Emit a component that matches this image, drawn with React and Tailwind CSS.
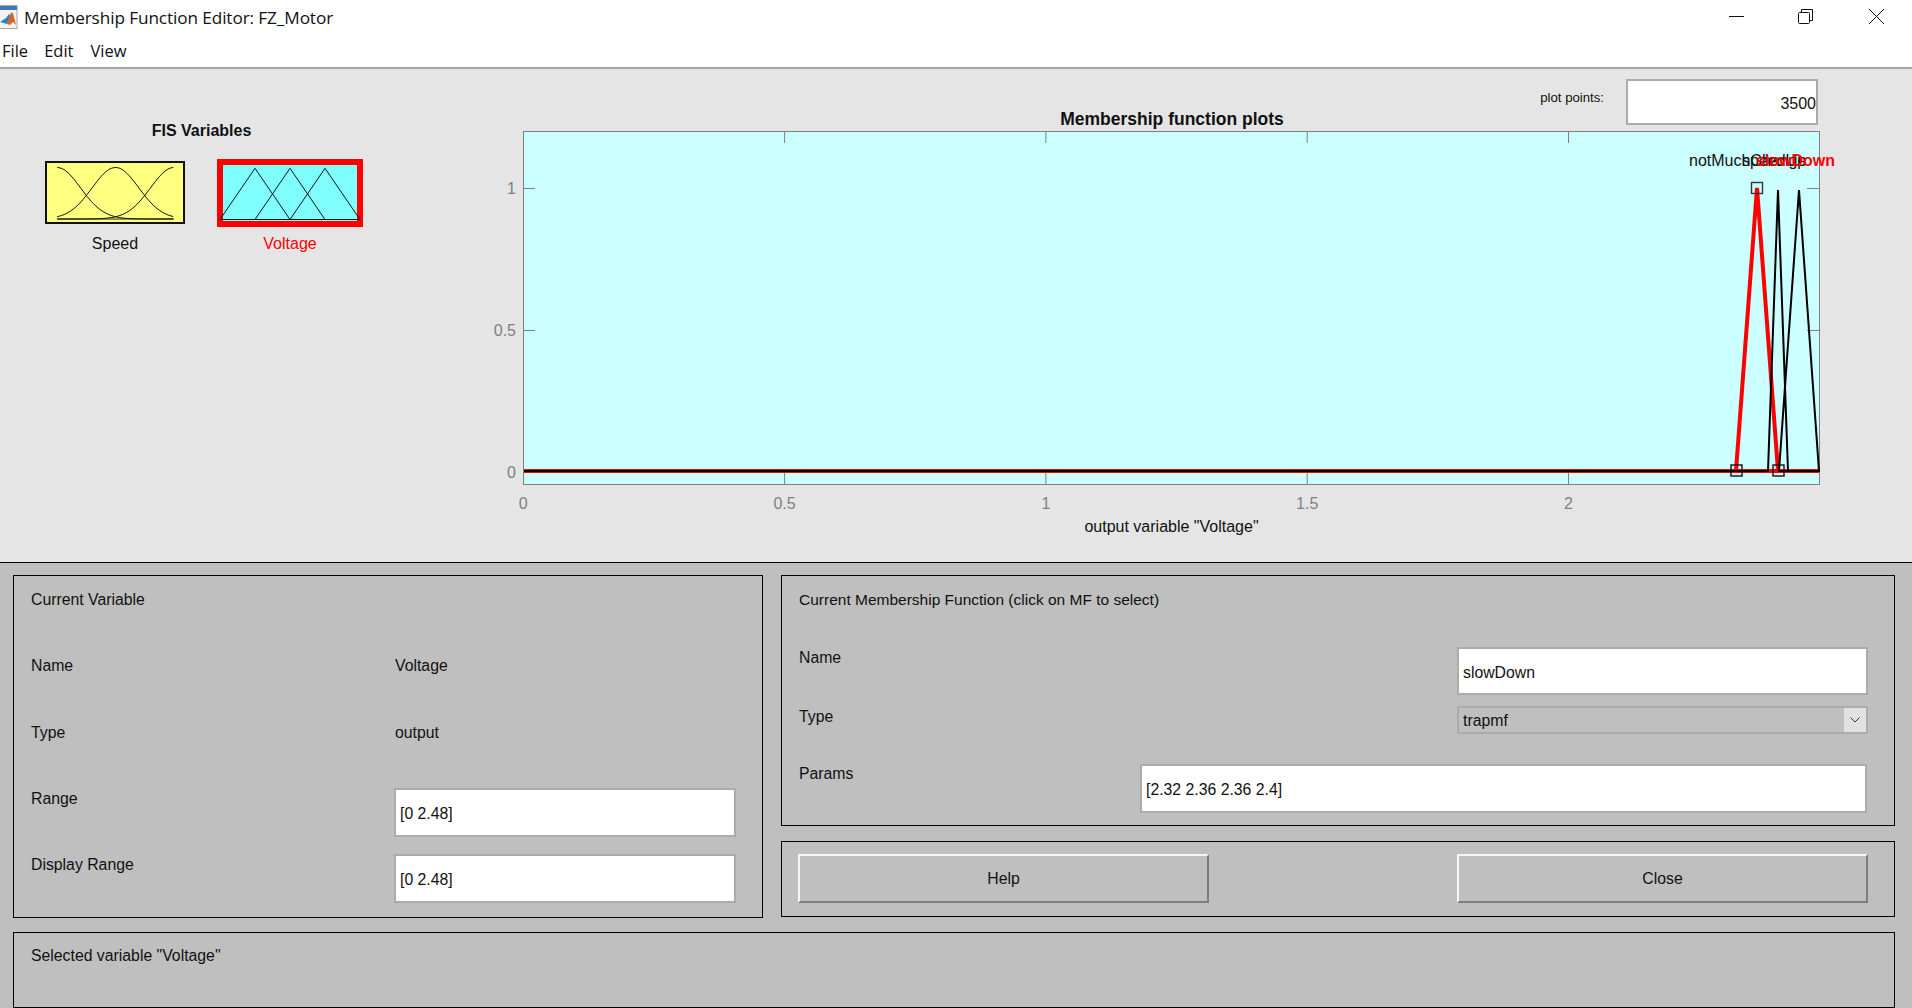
const sans = "font-['Liberation_Sans',Arial,sans-serif]";

// eje x del plot: 0 en 523.3, 522.6 px por unidad
const px = (v) => 523.3 + 522.6 * v;
const Y0 = 471;
const Y1 = 188;

const gauss = (c) => {
    const pts = [];
    for (let x = 56.7; x <= 173.4; x += 2) {
        const y = 219.5 - 51.5 * Math.exp(-((x - c) * (x - c)) / (2 * 23.3 * 23.3));
        pts.push(`${x.toFixed(1)},${y.toFixed(1)}`);
    }
    return pts.join(' ');
};

const MatlabIcon = () => (
    <svg width="18" height="24" viewBox="0 0 18 24" className="shrink-0">
        <rect x="-3" y="0.5" width="20" height="23" fill="#f4f4f4" stroke="#a8a8a8" />
        <rect x="-3" y="1" width="20" height="4" fill="#3f78b5" />
        <path d="M0 17 L6 13 L9 9 L11 12 L7 19 Z" fill="#2f7fc4" />
        <path d="M7 19 L11 7.5 L13 8 L16 20 L13 17 L10 20 Z" fill="#d9651f" />
    </svg>
);

const WindowControls = () => (
    <div className="flex items-start pt-[9px] pr-[28px]">
        <svg width="15" height="15" viewBox="0 0 15 15" className="mr-[54px]">
            <path d="M0 7.5H15" stroke="#111" strokeWidth="1" />
        </svg>
        <svg width="15" height="15" viewBox="0 0 15 15" className="mr-[56px]">
            <path d="M3.5 3.5V0.5H14.5V11.5H11.5" fill="none" stroke="#111" />
            <rect x="0.5" y="3.5" width="11" height="11" rx="1" fill="#fff" stroke="#111" />
        </svg>
        <svg width="15" height="15" viewBox="0 0 15 15">
            <path d="M0 0L15 15M15 0L0 15" stroke="#111" strokeWidth="1" />
        </svg>
    </div>
);

const SpeedIcon = () => (
    <svg width="140" height="63" viewBox="44.5 161.5 140 63">
        <rect x="45.5" y="162.5" width="138" height="61" fill="#ffff80" stroke="#111" strokeWidth="2" />
        <path d="M56.7 219.5H173.4" stroke="#222" strokeWidth="1.2" />
        <polyline points={gauss(56.7)} fill="none" stroke="#111" strokeWidth="1" />
        <polyline points={gauss(115)} fill="none" stroke="#111" strokeWidth="1" />
        <polyline points={gauss(173.4)} fill="none" stroke="#111" strokeWidth="1" />
    </svg>
);

const VoltageIcon = () => (
    <svg width="146" height="68" viewBox="217 159 146 68">
        <rect x="220" y="162" width="140" height="62" fill="#80ffff" stroke="#ff0000" strokeWidth="6" />
        <path
            d="M220 219.5H360M220 219.5L255 168.3L290 219.5M255 219.5L290 168.3L325 219.5M290 219.5L325 168.3L360 219.5"
            fill="none"
            stroke="#111"
            strokeWidth="1"
        />
    </svg>
);

const PlotChart = () => {
    const xTicks = [0, 0.5, 1, 1.5, 2];
    return (
        <svg width="1432" height="421" viewBox="480 129 1432 421" className={`block overflow-visible ${sans}`}>
            <rect x="523.5" y="131.5" width="1296" height="353" fill="#ccffff" stroke="#808080" />
            {xTicks.map((v) => (
                <g key={v}>
                    {v > 0 && <path d={`M${px(v)} 131V143M${px(v)} 484V472`} stroke="#808080" />}
                    <text x={px(v)} y="509" textAnchor="middle" fontSize="16" fill="#808080">
                        {v}
                    </text>
                </g>
            ))}
            {[
                ['1', Y1],
                ['0.5', 330],
            ].map(([label, y]) => (
                <path key={label} d={`M523 ${y}.5H535M1807 ${y}.5H1819`} stroke="#808080" />
            ))}
            <text x="516" y="194" textAnchor="end" fontSize="16" fill="#808080">1</text>
            <text x="516" y="336" textAnchor="end" fontSize="16" fill="#808080">0.5</text>
            <text x="516" y="478" textAnchor="end" fontSize="16" fill="#808080">0</text>

            <path d={`M524 ${Y0}H1819`} stroke="#ff0000" strokeWidth="4" />
            <path d={`M1736 ${Y0}L1757 ${Y1}L1778 ${Y0}`} fill="none" stroke="#ff0000" strokeWidth="4" />
            <path
                d={`M524 ${Y0}H1768L1778 ${Y1 + 2}L1788 ${Y0}H1779L1799 ${Y1 + 2}L1819 ${Y0}H1788`}
                fill="none"
                stroke="#000"
                strokeWidth="2"
            />
            <rect x="1751.5" y="182.5" width="11" height="11" fill="none" stroke="#333" strokeWidth="1.4" />
            <rect x="1731" y="465" width="11" height="11" fill="none" stroke="#111" strokeWidth="1.4" />
            <rect x="1773" y="465" width="11" height="11" fill="none" stroke="#111" strokeWidth="1.4" />

            <text x="1689" y="166" fontSize="16" fill="#111">notMuchChange</text>
            <text x="1742" y="166" fontSize="16" fill="#111">speedUp</text>
            <text x="1835" y="166" textAnchor="end" fontSize="16" fill="#ff0000" fontWeight="700">slowDown</text>

            <text x="1171.5" y="532" textAnchor="middle" fontSize="16" fill="#111">
                output variable "Voltage"
            </text>
        </svg>
    );
};

const Field = ({ children, className }) => (
    <div className={`flex items-center bg-white border-2 border-[#ababab] pl-[4px] pt-[3px] text-[15.8px] text-[#111] ${className}`}>
        {children}
    </div>
);

const Panel = ({ children, className }) => (
    <div className={`border border-black ${className}`}>{children}</div>
);

const Button = ({ children, className }) => (
    <div
        className={`flex items-center justify-center w-[411px] h-[49px] pt-[1px] border-2 border-t-[#f6f6f6] border-l-[#f6f6f6] border-r-[#7c7c7c] border-b-[#7c7c7c] ${className}`}
    >
        {children}
    </div>
);

export default function App() {
    return (
        <div className={`flex flex-col w-[1912px] h-[1008px] overflow-hidden bg-white text-[#111] ${sans}`}>
            {/* barra de titulo */}
            <div className="flex justify-between h-[34px] shrink-0">
                <div className="flex items-start pt-[5px]">
                    <MatlabIcon />
                    <span className="ml-[6px] text-[17.2px] leading-[26px] font-['Open_Sans',sans-serif] tracking-[-0.1px]">
                        Membership Function Editor: FZ_Motor
                    </span>
                </div>
                <WindowControls />
            </div>

            {/* menu */}
            <div className="flex items-center h-[35px] shrink-0 pl-[2px] pt-[2px] gap-[16px] border-b-2 border-[#a6a6a6] text-[16.5px] font-['Open_Sans',sans-serif]">
                <span>File</span>
                <span>Edit</span>
                <span className="ml-[1px]">View</span>
            </div>

            {/* zona superior */}
            <div className="flex h-[493px] shrink-0 bg-[#e5e5e5]">
                <div className="w-[480px] shrink-0 pt-[52px]">
                    <div className="w-[403px] text-center text-[16px] leading-[20px] font-bold">FIS Variables</div>
                    <div className="flex pl-[45px] mt-[1px] text-[16px] leading-[18px]">
                        <div className="flex flex-col items-center w-[140px] mr-[32px] pt-[19px]">
                            <SpeedIcon />
                            <span className="mt-[11px]">Speed</span>
                        </div>
                        <div className="flex flex-col items-center w-[146px] pt-[17px] text-[#ff0000]">
                            <VoltageIcon />
                            <span className="mt-[8px]">Voltage</span>
                        </div>
                    </div>
                </div>
                <div className="flex flex-col w-[1432px]">
                    <div className="flex items-end h-[60px]">
                        <div className="ml-[560px] w-[264px] text-center text-[17.5px] leading-[19px] font-bold">
                            Membership function plots
                        </div>
                        <div className="flex items-center ml-auto mr-[94px] mb-[4px]">
                            <span className="text-[13.2px] mr-[22px] mb-[8px]">plot points:</span>
                            <Field className="w-[192px] h-[46px] justify-end pr-0 text-[16px]">3500</Field>
                        </div>
                    </div>
                    <PlotChart />
                </div>
            </div>

            {/* zona inferior */}
            <div className="flex flex-col flex-1 gap-[14px] pl-[13px] pt-[12px] bg-[#bfbfbf] border-t border-black text-[15.8px] leading-[18px]">
                <div className="flex gap-[18px]">
                    <Panel className="w-[750px] h-[343px] pl-[17px] pt-[15px]">
                        <div>Current Variable</div>
                        <div className="flex mt-[48px]">
                            <span className="w-[364px]">Name</span>
                            <span>Voltage</span>
                        </div>
                        <div className="flex mt-[49px]">
                            <span className="w-[364px]">Type</span>
                            <span>output</span>
                        </div>
                        <div className="flex mt-[46px]">
                            <span className="w-[363px] pt-[2px]">Range</span>
                            <Field className="w-[342px] h-[49px]">[0 2.48]</Field>
                        </div>
                        <div className="flex mt-[17px]">
                            <span className="w-[363px] pt-[2px]">Display Range</span>
                            <Field className="w-[342px] h-[49px]">[0 2.48]</Field>
                        </div>
                    </Panel>
                    <div className="flex flex-col gap-[15px]">
                        <Panel className="w-[1114px] h-[251px] pl-[17px] pr-[26px] pt-[15px]">
                            <div className="text-[15.5px]">Current Membership Function (click on MF to select)</div>
                            <div className="flex justify-between mt-[38px]">
                                <span className="pt-[2px]">Name</span>
                                <Field className="w-[411px] h-[48px]">slowDown</Field>
                            </div>
                            <div className="flex justify-between mt-[11px]">
                                <span className="pt-[2px]">Type</span>
                                <div className="flex items-center justify-between w-[411px] h-[28px] border-2 border-[#ababab] pl-[4px]">
                                    <span className="pt-[2px]">trapmf</span>
                                    <div className="flex items-center justify-center w-[22px] h-full bg-[#e1e1e1]">
                                        <svg width="10" height="6" viewBox="0 0 10 6">
                                            <path d="M0.5 0.5L5 5L9.5 0.5" fill="none" stroke="#333" strokeWidth="1" />
                                        </svg>
                                    </div>
                                </div>
                            </div>
                            <div className="flex justify-between mt-[30px] pr-[1px]">
                                <span className="pt-[1px]">Params</span>
                                <Field className="w-[727px] h-[49px]">[2.32 2.36 2.36 2.4]</Field>
                            </div>
                        </Panel>
                        <Panel className="flex justify-between w-[1114px] h-[76px] pl-[16px] pr-[26px] pt-[12px]">
                            <Button>Help</Button>
                            <Button>Close</Button>
                        </Panel>
                    </div>
                </div>
                <Panel className="w-[1882px] h-[76px] pl-[17px] pt-[14px]">Selected variable "Voltage"</Panel>
            </div>
        </div>
    );
}
